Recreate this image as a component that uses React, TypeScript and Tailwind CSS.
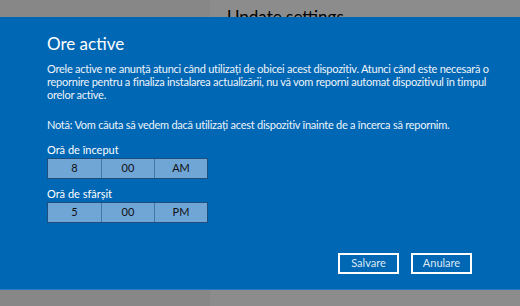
import React from "react";

function TimePicker({ h, m, ap }: { h: string; m: string; ap: string }) {
  return (
    <div className="flex w-[161px] h-[21px] border border-[#1d4f7e] bg-[#6fa6d6] text-[#111] text-[11px]">
      <div className="w-[54px] flex items-center justify-center border-r border-[#3f78ad]">{h}</div>
      <div className="w-[53px] flex items-center justify-center border-r border-[#3f78ad]">{m}</div>
      <div className="flex-1 flex items-center justify-center">{ap}</div>
    </div>
  );
}

export default function App() {
  return (
    <div className="relative w-[520px] h-[306px] overflow-hidden flex bg-[#878787]" style={{ fontFamily: 'Lato, "Open Sans", sans-serif' }}>
      <div className="w-[210px]" />
      <div className="flex-1 bg-[#8c8c8c] pl-[17px] pt-[4px] text-[17px] text-black">Update settings</div>

      <div className="absolute left-0 right-0 top-[17px] h-[273px] bg-[#0067b4] border-b border-[#2a78c0] text-white pl-[47px] pr-[28px] pt-[16px]">
        <h1 className="text-[17px] leading-[22px]">Ore active</h1>
        <p className="mt-[7px] text-[11px] leading-[13px] tracking-[-0.25px] text-[#eef4fa]">
          Orele active ne anunță atunci când utilizați de obicei acest dispozitiv. Atunci când este necesară o repornire pentru a finaliza instalarea actualizării, nu vă vom reporni automat dispozitivul în timpul orelor active.
        </p>
        <p className="mt-[17px] text-[11px] leading-[13px] tracking-[-0.25px] text-[#eef4fa]">
          Notă: Vom căuta să vedem dacă utilizați acest dispozitiv înainte de a încerca să repornim.
        </p>

        <div className="mt-[12px] text-[11px] leading-[14px]">Oră de început</div>
        <div className="mt-[1px]">
          <TimePicker h="8" m="00" ap="AM" />
        </div>
        <div className="mt-[8px] text-[11px] leading-[14px]">Oră de sfârșit</div>
        <div className="mt-[1px]">
          <TimePicker h="5" m="00" ap="PM" />
        </div>

        <div className="flex justify-end gap-[12px] mt-[30px] pr-[20px]">
          <button className="w-[61px] h-[21px] border-2 border-white text-[11px] text-[#dfe9f4]">Salvare</button>
          <button className="w-[61px] h-[21px] border-2 border-white text-[11px] text-[#dfe9f4]">Anulare</button>
        </div>
      </div>
    </div>
  );
}
